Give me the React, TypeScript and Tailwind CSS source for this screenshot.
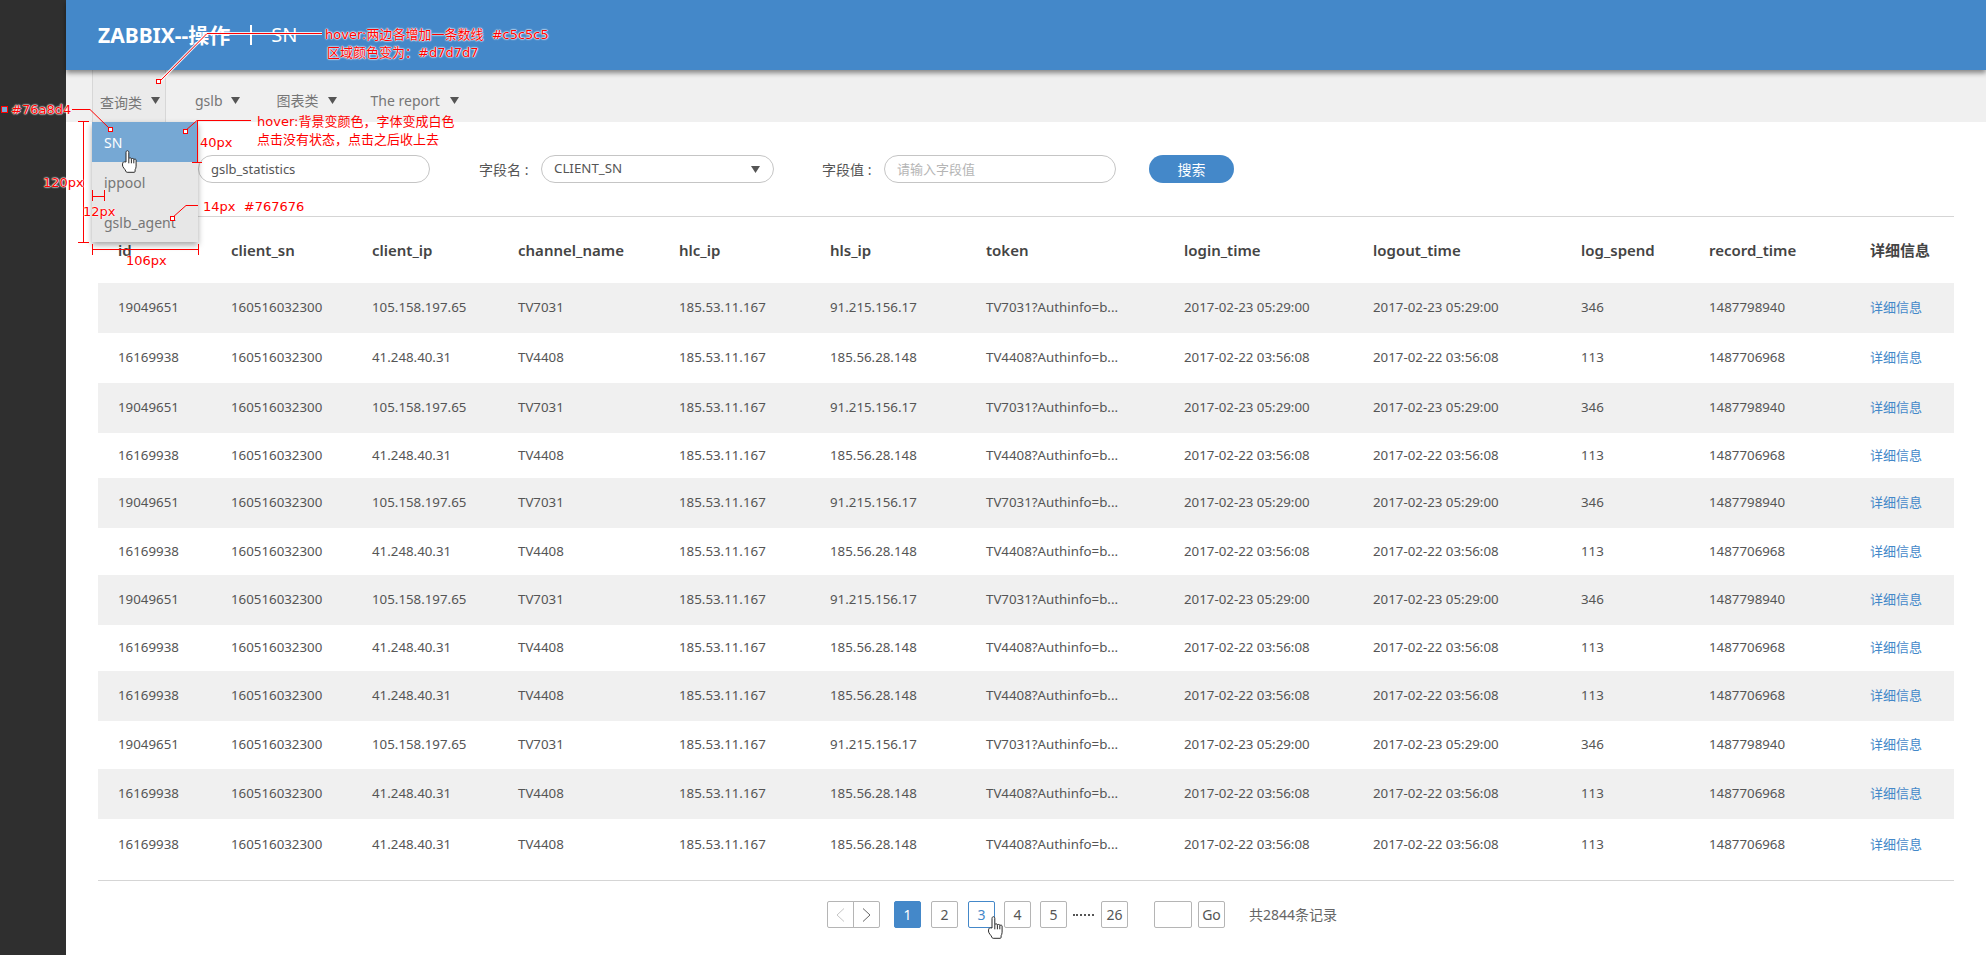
const COLS = 'grid grid-cols-[113px_141px_146px_161px_151px_156px_198px_189px_208px_128px_161px_1fr] pl-5 items-center';

const HEADS = ['id', 'client_sn', 'client_ip', 'channel_name', 'hlc_ip', 'hls_ip', 'token', 'login_time', 'logout_time', 'log_spend', 'record_time', '详细信息'];

const A = ['19049651', '160516032300', '105.158.197.65', 'TV7031', '185.53.11.167', '91.215.156.17', 'TV7031?Authinfo=b...', '2017-02-23 05:29:00', '2017-02-23 05:29:00', '346', '1487798940'];
const B = ['16169938', '160516032300', '41.248.40.31', 'TV4408', '185.53.11.167', '185.56.28.148', 'TV4408?Authinfo=b...', '2017-02-22 03:56:08', '2017-02-22 03:56:08', '113', '1487706968'];

const ROWS = [
  { cells: A, h: 'h-[50px]' },
  { cells: B, h: 'h-[50px]' },
  { cells: A, h: 'h-[50px]' },
  { cells: B, h: 'h-[45px]' },
  { cells: A, h: 'h-[50px]' },
  { cells: B, h: 'h-[47px]' },
  { cells: A, h: 'h-[50px]' },
  { cells: B, h: 'h-[46px]' },
  { cells: B, h: 'h-[50px]' },
  { cells: A, h: 'h-[48px]' },
  { cells: B, h: 'h-[50px]' },
  { cells: B, h: 'h-[52px]' },
];

const Caret = ({ className = '' }: { className?: string }) => (
  <svg width="9" height="7" viewBox="0 0 9 7" className={className}>
    <path d="M0 0h9L4.5 7z" fill="#555" />
  </svg>
);

const Hand = ({ className = '' }: { className?: string }) => (
  <svg width="16" height="23" viewBox="0 0 16 23" className={className}>
    <path
      d="M4 12V2.5C4 1.3 4.7.7 5.4.7s1.4.6 1.4 1.8V8.6c0-1 2.6-1 2.6 0v.6c0-1 2.4-1 2.4 0v.6c0-.9 2.3-.9 2.3.2v6.2c0 1.6-.5 2.7-1 3.5v1.6c0 .7-.4 1-1 1H5.2c-.7 0-1.1-.3-1.3-1-.4-1.100-1.200-2.100-2-3.100C1.100 17.200.5 16.300.5 15c0-1.300.3-2.600 1-3 .6-.3 1.600-.2 2.500 0z"
      fill="#fff"
      stroke="#2b2b2b"
      strokeWidth="1"
      strokeLinejoin="round"
    />
    <path d="M6.800 8.800v4.500M9.400 9.200v4.100M11.800 9.800v3.500" stroke="#2b2b2b" strokeWidth="1" fill="none" />
  </svg>
);

const PageBtn = ({ label, className = '' }: { label: string; className?: string }) => (
  <div className={`w-[27px] h-[27px] flex items-center justify-center border border-[#b5b5b5] rounded-[2px] text-[14px] text-[#555] ${className}`}>
    {label}
  </div>
);

// the red spec marks drawn on top of the design
const Marks = () => (
  <div className="w-[1986px] h-[955px] relative whitespace-pre text-[13px] leading-[20px] text-[#f00] font-['DejaVu_Sans','Noto_Sans_CJK_SC',sans-serif]">
    <svg width="1986" height="955" className="absolute left-0 top-0 pointer-events-none">
      <g fill="none" stroke="#fff" strokeWidth="3" opacity="0.85">
        <path d="M322 33.500H207L159 82" />
      </g>
      <g fill="none" stroke="#f00" strokeWidth="1" shapeRendering="crispEdges">
        <path d="M322 33.500H207" />
        <path d="M72 109.500H90" />
        <path d="M197 120.500H251" />
        <path d="M186 205.500H198" />
        <path d="M83.500 121V242M78 121.500H89M78 242.500H89" />
        <path d="M197.500 120V162M192 162.500H202" />
        <path d="M92 196.500H105M92.500 190V201M104.500 190V201" />
        <path d="M92 249.500H198M92.500 244V255M198.500 244V255" />
      </g>
      <g fill="none" stroke="#f00" strokeWidth="1">
        <path d="M207 33.500L159 82" />
        <path d="M90 109.500L110 129" />
        <path d="M197 120.500L185 131" />
        <path d="M186 205.500L172 218" />
      </g>
      <g fill="#fff" stroke="#f00" strokeWidth="1" shapeRendering="crispEdges">
        <rect x="156.500" y="79.500" width="4" height="4" />
        <rect x="108.500" y="127.500" width="4" height="4" />
        <rect x="183.500" y="129.500" width="4" height="4" />
        <rect x="170.500" y="216.500" width="4" height="4" />
        <rect x="1.500" y="106.500" width="6" height="6" fill="#76a8d4" />
      </g>
    </svg>
    <span className="absolute left-[325px] top-[25px] [text-shadow:0_0_1px_#fff,0_0_1px_#fff,0_0_2px_#fff,0_0_2px_#fff]">hover:两边各增加一条数线  #c5c5c5</span>
    <span className="absolute left-[327px] top-[43px] [text-shadow:0_0_1px_#fff,0_0_1px_#fff,0_0_2px_#fff,0_0_2px_#fff]">区域颜色变为：#d7d7d7</span>
    <span className="absolute left-[11px] top-[100px] [text-shadow:0_0_1px_#fff,0_0_1px_#fff,0_0_2px_#fff,0_0_2px_#fff]">#76a8d4</span>
    <span className="absolute left-[257px] top-[112px]">hover:背景变颜色，字体变成白色</span>
    <span className="absolute left-[257px] top-[130px]">点击没有状态，点击之后收上去</span>
    <span className="absolute left-[200px] top-[133px]">40px</span>
    <span className="absolute left-[43px] top-[173px] [text-shadow:0_0_1px_#fff,0_0_1px_#fff,0_0_2px_#fff,0_0_2px_#fff]">120px</span>
    <span className="absolute left-[83px] top-[202px] [text-shadow:0_0_1px_#fff,0_0_1px_#fff,0_0_2px_#fff]">12px</span>
    <span className="absolute left-[203px] top-[197px]">14px  #767676</span>
    <span className="absolute left-[126px] top-[251px] [text-shadow:0_0_1px_#fff,0_0_2px_#fff]">106px</span>
  </div>
);

const App = () => {
  return (
    <div className="relative w-[1986px] h-[955px] overflow-hidden flex bg-white font-['Noto_Sans','Noto_Sans_CJK_SC',sans-serif]">
      {/* Sidebar */}
      <div className="w-[66px] shrink-0 bg-[#2f2f2f]" />

      <div className="flex-1 flex flex-col min-w-0">
        {/* Header */}
        <div className="relative z-10 h-[70px] shrink-0 bg-[#4488c9] shadow-[0_3px_5px_rgba(0,0,0,0.45)] pl-8 flex items-center text-white">
          <span className="text-[21px] font-bold leading-none">ZABBIX--操作</span>
          <span className="ml-[20px] w-[2px] h-[20px] bg-white" />
          <span className="ml-[19px] text-[20px] leading-none">SN</span>
        </div>

        {/* Nav */}
        <div className="h-[52px] shrink-0 bg-[#f0f0f0] pl-[26px] flex text-[14px] text-[#767676]">
          <div className="w-[74px] pl-[7px] pt-[12px] flex items-center bg-[#ebebeb] border-x border-[#d7d7d7]">
            <span>查询类</span>
            <Caret className="ml-[9px] -mt-[4px]" />
          </div>
          <div className="ml-[29px] pt-[8px] flex items-center">
            <span>gslb</span>
            <Caret className="ml-[8px]" />
          </div>
          <div className="ml-[37px] pt-[8px] flex items-center">
            <span>图表类</span>
            <Caret className="ml-[9px]" />
          </div>
          <div className="ml-[34px] pt-[8px] flex items-center">
            <span>The report</span>
            <Caret className="ml-[10px]" />
          </div>
        </div>

        {/* Content */}
        <div className="flex-1 px-8 text-[13.3px] text-[#555]">
          {/* Search */}
          <div className="mt-[33px] h-[28px] pl-[100px] flex items-center">
            <input
              readOnly
              value="gslb_statistics"
              className="w-[232px] h-[28px] px-3 rounded-full border border-[#c5c5c5] text-[13px] text-[#555] outline-none"
            />
            <span className="ml-[49px] w-[62px] text-[14px]">字段名 :</span>
            <div className="w-[233px] h-[28px] px-3 rounded-full border border-[#c5c5c5] flex items-center justify-between text-[13.3px]">
              <span>CLIENT_SN</span>
              <Caret className="mr-[1px]" />
            </div>
            <span className="ml-[48px] w-[62px] text-[14px]">字段值 :</span>
            <input
              readOnly
              placeholder="请输入字段值"
              className="w-[232px] h-[28px] px-3 rounded-full border border-[#c5c5c5] text-[13px] outline-none placeholder:text-[#b5b5b5]"
            />
            <button className="ml-[33px] w-[85px] h-[28px] rounded-full bg-[#4488c9] text-white text-[14px]">搜索</button>
          </div>

          <div className="mt-[33px] border-t border-[#d5d5d5]" />

          {/* Table */}
          <div className={`${COLS} h-[66px] text-[15px] font-semibold text-[#444]`}>
            {HEADS.map((h) => (
              <div key={h} className="whitespace-nowrap">{h}</div>
            ))}
          </div>
          {ROWS.map((row, i) => (
            <div key={i} className={`${COLS} ${row.h} ${i % 2 === 0 ? 'bg-[#f0f0f0]' : ''}`}>
              {row.cells.map((c, j) => (
                <div key={j} className="whitespace-nowrap">{c}</div>
              ))}
              <div className="text-[#4488c9] text-[13px]">详细信息</div>
            </div>
          ))}

          <div className="mt-[9px] border-t border-[#d5d5d5]" />

          {/* Pagination */}
          <div className="mt-[20px] ml-[729px] flex items-center">
            <div className="w-[27px] h-[27px] flex items-center justify-center border border-[#b5b5b5] rounded-l-[2px]">
              <svg width="9" height="14" viewBox="0 0 9 14" fill="none" stroke="#c5c5c5">
                <path d="M8 .5L1 7l7 6.500" />
              </svg>
            </div>
            <div className="w-[27px] h-[27px] -ml-px flex items-center justify-center border border-[#b5b5b5] rounded-r-[2px]">
              <svg width="9" height="14" viewBox="0 0 9 14" fill="none" stroke="#666">
                <path d="M1 .5L8 7l-7 6.500" />
              </svg>
            </div>
            <PageBtn label="1" className="ml-[14px] bg-[#4488c9] !border-[#4488c9] !text-white" />
            <PageBtn label="2" className="ml-[10px]" />
            <PageBtn label="3" className="ml-[10px] !border-[#4488c9] !text-[#4488c9]" />
            <PageBtn label="4" className="ml-[9px]" />
            <PageBtn label="5" className="ml-[9px]" />
            <span className="ml-[6px] w-[21px] h-[2px] border-t-2 border-dotted border-[#555]" />
            <PageBtn label="26" className="ml-[7px]" />
            <div className="ml-[26px] w-[38px] h-[27px] border border-[#b5b5b5] rounded-[2px]" />
            <PageBtn label="Go" className="ml-[6px]" />
            <span className="ml-[24px] text-[14px] text-[#666] whitespace-nowrap">共2844条记录</span>
          </div>
        </div>
      </div>

      {/* Dropdown open under 查询类 */}
      <div className="absolute z-20 left-[92px] top-[122px] w-[106px] h-[120px] bg-[#e7e7e7] shadow-[0_3px_6px_rgba(0,0,0,0.35)] text-[14px] text-[#767676]">
        <div className="h-[40px] pl-3 flex items-center bg-[#76a8d4] text-white">SN</div>
        <div className="h-[40px] pl-3 flex items-center">ippool</div>
        <div className="h-[40px] pl-3 flex items-center">gslb_agent</div>
      </div>

      <Hand className="absolute z-30 left-[122px] top-[150px]" />
      <Hand className="absolute z-30 left-[988px] top-[916px]" />

      <div className="absolute z-40 left-0 top-0">
        <Marks />
      </div>
    </div>
  );
};

export default App;
